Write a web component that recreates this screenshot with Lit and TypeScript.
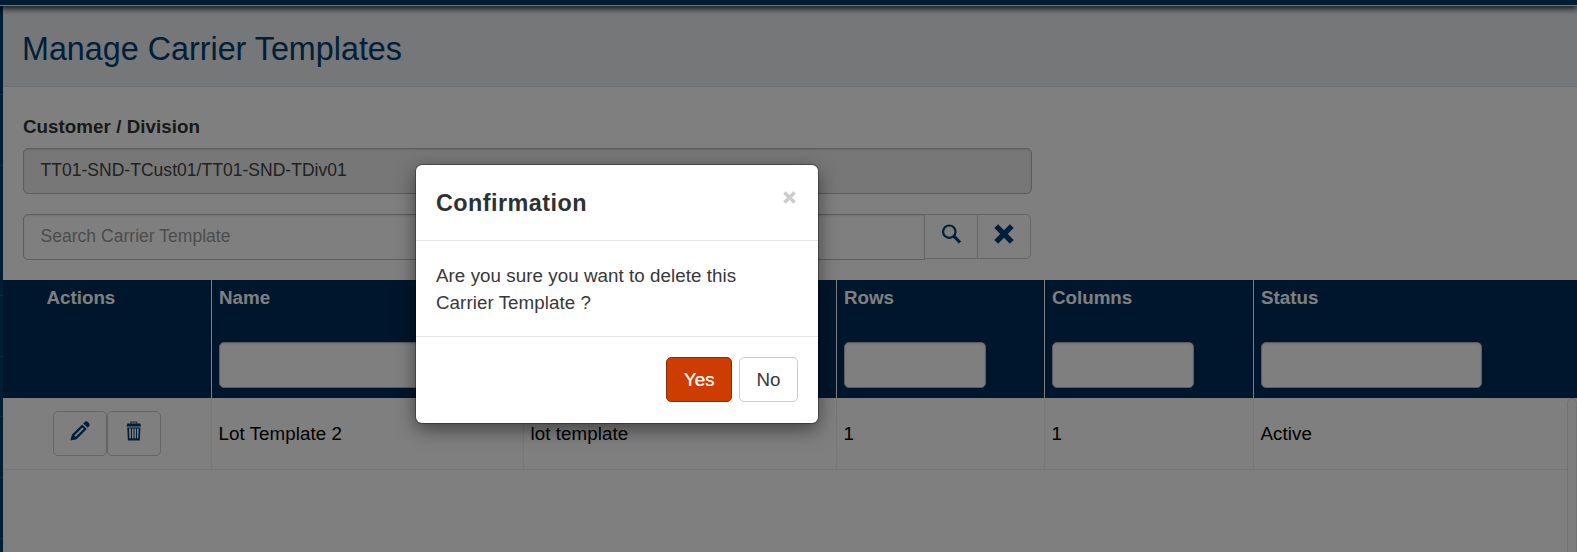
import { LitElement, html, css } from "lit";
import { customElement } from "lit/decorators.js";

const pencil = html`<svg width="20" height="20" viewBox="0 0 20 20">
  <path fill="currentColor" fill-rule="evenodd" d="M.4 19.6 2 13.6 12.2 3.4 16.8 8 6.6 18.2ZM4.4 14.4 5.8 15.8 13.8 7.8 12.4 6.4Z" />
  <path fill="currentColor" d="M13.2 2.4 14.8.9Q16.2-.2 17.8 1 20.4 3 19.2 5L17.8 6.8Z" />
</svg>`;

const trash = html`<svg width="16" height="20" viewBox="0 0 16 20">
  <path fill="none" stroke="currentColor" stroke-width="1.3" stroke-opacity=".75" d="M4.9 3V1.2h5.8V3" />
  <path fill="currentColor" d="M1.2 2.6h13.2l.6 2.8H.6Z" />
  <path fill="currentColor" fill-rule="evenodd" d="M1.2 6.6h13.2L13.8 19.5H1.9ZM3 7.6 3.4 17.2h1.5V7.6ZM6 7.6V17.2h1.5V7.6ZM8.5 7.6V17.2h1.5V7.6ZM11 7.6V17.2h1.2l.5-9.6Z" />
</svg>`;

const magnifier = html`<svg width="20" height="20" viewBox="0 0 20 20">
  <circle cx="8.3" cy="7.7" r="6.2" fill="none" stroke="currentColor" stroke-width="2.2" />
  <path d="M12.8 12.2 19 18.4" fill="none" stroke="currentColor" stroke-width="3.1" />
</svg>`;

const cross = html`<svg width="20" height="20" viewBox="0 0 20 20">
  <path d="M2.2 2.2 17.8 17.8M17.8 2.2 2.2 17.8" fill="none" stroke="currentColor" stroke-width="5.4" />
</svg>`;

interface Column {
  title: string;
  value: string;
  cls: string;
}

const COLUMNS: Column[] = [
  { title: "Name", value: "Lot Template 2", cls: "wide" },
  { title: "", value: "lot template", cls: "wide" },
  { title: "Rows", value: "1", cls: "slim" },
  { title: "Columns", value: "1", cls: "slim" },
  { title: "Status", value: "Active", cls: "status" },
];

@customElement("app-root")
export class AppRoot extends LitElement {
  static styles = css`
    * { box-sizing: border-box; }
    :host {
      display: block;
      position: relative;
      height: 552px;
      overflow: hidden;
      background: #fff;
      color: #333;
      font: 18.75px/25px "Liberation Sans", Arial, sans-serif;
    }
    .topbar {
      position: relative;
      z-index: 1;
      height: 6px;
      background: #003a68;
      border-bottom: 1px solid #e4e7e7;
      box-shadow: 0 1px 7px 1px #000;
    }
    .shell { display: flex; height: 546px; }
    .side {
      width: 3px;
      background: #003a68;
      display: flex;
      flex-direction: column;
      padding-top: 88px;
    }
    .tick { height: 1px; flex: none; background: #1d5583; margin-bottom: 59.7px; }
    .tick.first { margin-bottom: 70px; }
    .tick.second { margin-bottom: 129px; }
    .main { flex: 1; min-width: 0; display: flex; flex-direction: column; }
    .page-head {
      height: 81px;
      padding: 22px 0 0 19px;
      background: #eceff2;
      border-bottom: 1px solid #dcdcec;
    }
    h1 { margin: 0; font-size: 32.3px; line-height: 43px; font-weight: 400; color: #003e70; }
    .form { padding: 28px 20px 0; height: 193px; }
    label { display: block; height: 33px; line-height: 24px; font-weight: 700; letter-spacing: 0.05px; }
    .field {
      display: block;
      height: 46px;
      padding: 0 16.5px;
      border: 1px solid #bbb;
      border-radius: 5px;
      background: #fff;
      box-shadow: inset 0 1px 2px rgba(0, 0, 0, 0.1);
      font: 17.5px/42px "Liberation Sans", Arial, sans-serif;
      letter-spacing: 0.03px;
      color: #444;
    }
    .readonly { width: 1009px; background: #eee; }
    .group { display: flex; width: 1008px; margin-top: 20px; }
    .search { flex: 1; border-radius: 5px 0 0 5px; color: #999; }
    .icon-btn {
      height: 45px;
      width: 54px;
      display: flex;
      align-items: flex-start;
      justify-content: center;
      padding: 9px 0 0;
      border: 1px solid #ccc;
      border-radius: 5px;
      background: #fff;
      color: #003e70;
    }
    .group .icon-btn { border-radius: 0; margin-left: -1px; }
    .group .icon-btn:last-child { border-radius: 0 5px 5px 0; }
    .grid-head, .grid-row {
      display: grid;
      grid-template-columns: 208px 312px 313px 208px 209px 1fr;
    }
    .grid-head { height: 118px; background: #002c58; color: #fff; font-weight: 700; }
    .cell { padding: 5px 7px 0; border-left: 1px solid #fff; }
    .title { height: 25px; }
    .actions { padding: 5px 0 0 43.5px; }
    .filter { margin-top: 32px; }
    .wide .filter { width: 212px; }
    .slim .filter { width: 142px; }
    .status .filter { width: 221px; }
    .body { flex: 1; display: flex; min-height: 0; }
    .rows { flex: 1; }
    .grid-row { height: 72px; border-bottom: 1px solid #ececec; color: #000; letter-spacing: 0.06px; }
    .grid-row .cell { border-left-color: #eee; padding: 23px 0 0 6.5px; }
    .tools { display: flex; padding: 13px 0 0 50px; }
    .scroll {
      width: 10px;
      border: 1px solid #e4e4e4;
      border-bottom: 0;
      border-radius: 5px 5px 0 0;
      background: #fafafa;
    }
    .backdrop {
      position: absolute;
      inset: 0;
      z-index: 2;
      background: rgba(0, 0, 0, 0.5);
    }
    .modal {
      width: 402px;
      height: 258px;
      margin: 165px 0 0 416px;
      background: #fff;
      border-radius: 6px;
      box-shadow: 0 0 0 1px rgba(0, 0, 0, 0.3), 0 6px 19px rgba(0, 0, 0, 0.5);
    }
    .modal-head {
      display: flex;
      justify-content: space-between;
      height: 76px;
      padding: 22px 22px 0 20px;
      border-bottom: 1px solid #e5e5e5;
    }
    h4 { margin: 0; font-size: 23.4px; line-height: 32px; letter-spacing: 0.45px; color: #2d3134; }
    .close { margin-top: 4px; width: 13px; height: 13px; color: #ccc; }
    .close svg { display: block; width: 13px; height: 13px; }
    .modal-body {
      height: 96px;
      padding: 21px 60px 0 20px;
      line-height: 27px;
      letter-spacing: 0.06px;
      border-bottom: 1px solid #e5e5e5;
      color: #383838;
    }
    .modal-foot { display: flex; justify-content: flex-end; gap: 7px; padding: 20px 20px 0; }
    .btn {
      height: 45px;
      width: 59px;
      padding: 0;
      border: 1px solid #ccc;
      border-radius: 5px;
      background: #fff;
      color: #383838;
      font: 18.75px/43px "Liberation Sans", Arial, sans-serif;
      text-align: center;
    }
    .yes { width: 66px; background: #cd3c00; border-color: #8f2b00; color: #fff0eb; text-shadow: 0.4px 0 0 #fff0eb; }
  `;

  private headCell(c: Column) {
    return html`<div class="cell ${c.cls}">
      <div class="title">${c.title}</div>
      <div class="field filter"></div>
    </div>`;
  }

  render() {
    return html`
      <div class="topbar"></div>
      <div class="shell">
        <div class="side">
          ${["first", "second", "", "", "", "", ""].map((n) => html`<div class="tick ${n}"></div>`)}
        </div>
        <div class="main">
          <div class="page-head"><h1>Manage Carrier Templates</h1></div>
          <div class="form">
            <label>Customer / Division</label>
            <div class="field readonly">TT01-SND-TCust01/TT01-SND-TDiv01</div>
            <div class="group">
              <div class="field search">Search Carrier Template</div>
              <button class="icon-btn">${magnifier}</button>
              <button class="icon-btn">${cross}</button>
            </div>
          </div>
          <div class="grid-head">
            <div class="actions">Actions</div>
            ${COLUMNS.map((c) => this.headCell(c))}
          </div>
          <div class="body">
            <div class="rows">
              <div class="grid-row">
                <div class="tools">
                  <button class="icon-btn">${pencil}</button>
                  <button class="icon-btn">${trash}</button>
                </div>
                ${COLUMNS.map((c) => html`<div class="cell">${c.value}</div>`)}
              </div>
            </div>
            <div class="scroll"></div>
          </div>
        </div>
      </div>
      <div class="backdrop">
        <div class="modal">
          <div class="modal-head">
            <h4>Confirmation</h4>
            <div class="close">${cross}</div>
          </div>
          <div class="modal-body">Are you sure you want to delete this Carrier Template ?</div>
          <div class="modal-foot">
            <button class="btn yes">Yes</button>
            <button class="btn">No</button>
          </div>
        </div>
      </div>
    `;
  }
}
